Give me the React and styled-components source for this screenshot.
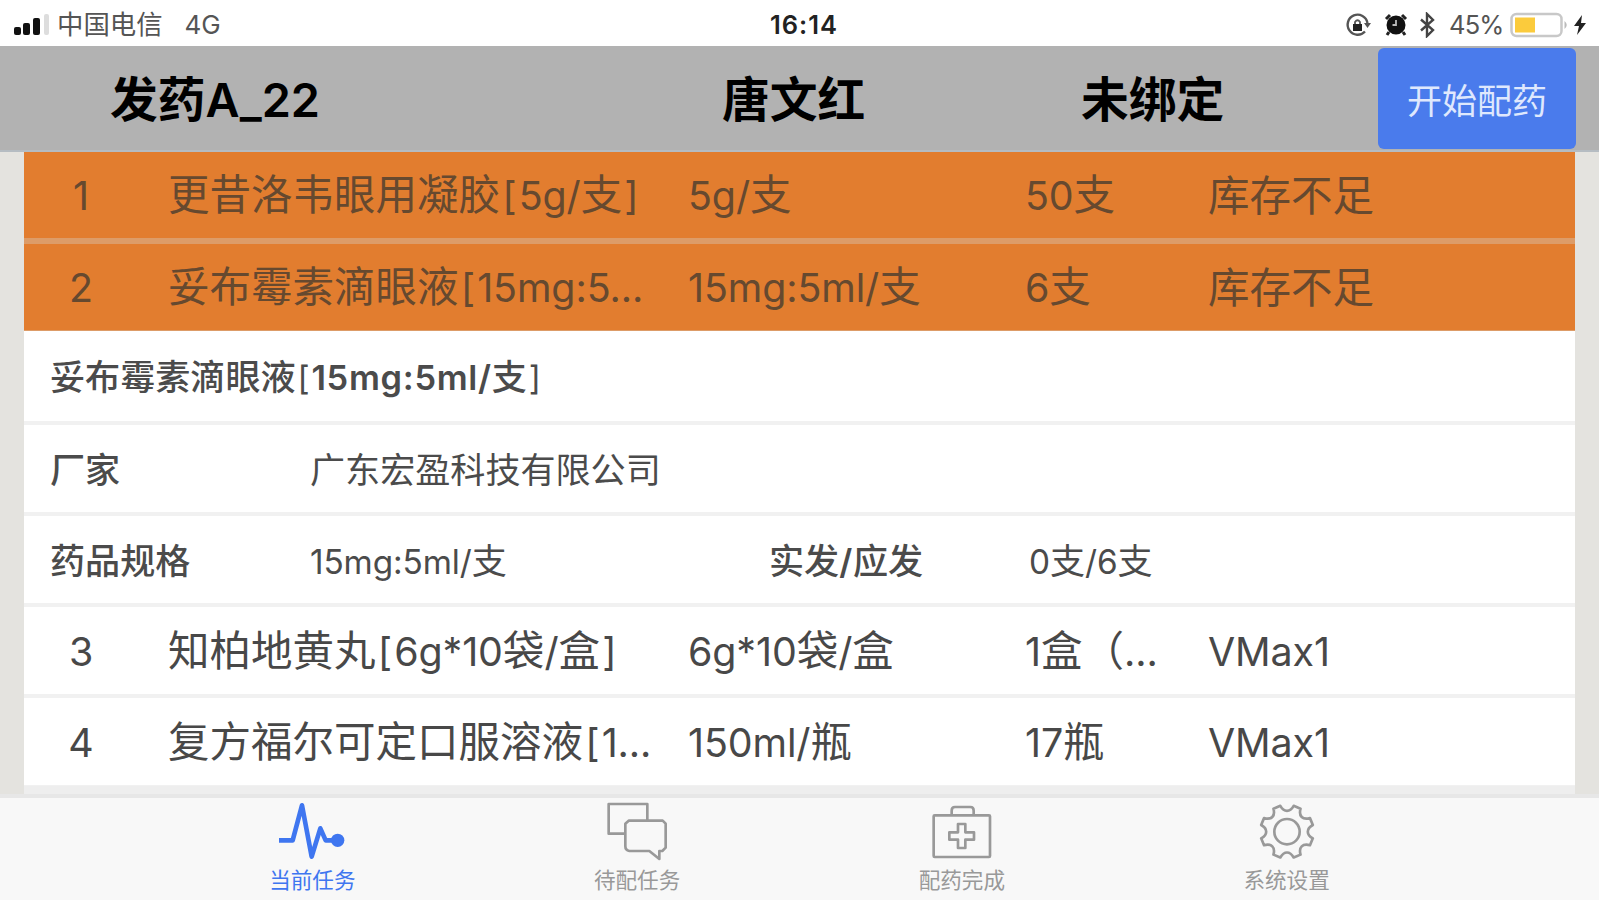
import React, { useState } from 'react';
import styled, { createGlobalStyle } from 'styled-components';

const GlobalStyle = createGlobalStyle`
  * {
    box-sizing: border-box;
  }
  body {
    margin: 0;
    overflow: hidden;
    font-family: Inter, "Noto Sans CJK SC", sans-serif;
  }
`;

const Screen = styled.div`
  display: flex;
  flex-direction: column;
  width: 1599px;
  height: 900px;
  background-color: #e4e3df;
`;

const StatusBar = styled.div`
  display: grid;
  grid-template-columns: 756px auto 1fr;
  align-items: center;
  height: 46px;
  padding: 3px 12px 0 14px;
  background-color: #fff;
  color: #555;
`;

const StatusGroup = styled.div`
  display: flex;
  align-items: center;
  justify-content: ${(props) => (props.$right ? 'flex-end' : 'flex-start')};
`;

const Carrier = styled.span`
  margin-left: 6px;
  font-size: 26.4px;
  line-height: 43px;
`;

const Network = styled.span`
  margin-left: 22px;
  font-size: 26px;
`;

const Clock = styled.span`
  font-size: 25.5px;
  font-weight: 600;
  letter-spacing: 1px;
  color: #222;
`;

const Percent = styled.span`
  width: 58px;
  margin: 0 3px 0 13px;
  font-size: 25.5px;
  letter-spacing: -0.8px;
`;

const Header = styled.header`
  display: flex;
  align-items: center;
  height: 106px;
  padding-left: 110px;
  background-color: #b2b2b2;
  border-bottom: 2px solid #b5bcc2;
  color: #000;
`;

const HeaderTitle = styled.div`
  width: ${(props) => props.$width}px;
  padding-top: 4px;
  font-size: 47.8px;
  font-weight: 600;
  line-height: 60px;
  white-space: nowrap;

  span {
    letter-spacing: 0;
  }
`;

const StartButton = styled.button`
  width: 198px;
  height: 101px;
  margin: 1px 0 0;
  padding: 4px 0 0;
  border: none;
  border-radius: 6px;
  background-color: #4a7bec;
  color: #dfe8fd;
  font-family: inherit;
  font-size: 35px;
  line-height: 50px;
  cursor: pointer;
`;

const List = styled.main`
  flex: 1;
  margin: 0 24px;
  background-color: #fff;
`;

const Row = styled.div`
  display: grid;
  grid-template-columns: 117px 520px 337px 183px 1fr;
  align-items: center;
  height: ${(props) => props.$height}px;
  padding: 1px 0 0 27px;
  background-color: ${(props) => (props.$warn ? '#e27d2f' : '#fff')};
  border-bottom: ${(props) => props.$line || 4}px solid ${(props) => (props.$warn ? '#dd9c68' : '#f1f1f1')};
  color: ${(props) => (props.$warn ? '#66492f' : '#484848')};
  font-size: 41.5px;
`;

const DetailRow = styled(Row)`
  grid-template-columns: ${(props) => props.$columns};
  padding: 3px 0 0 26px;
  color: #4b4b4b;
  font-size: 35.1px;
`;

const Cell = styled.div`
  font-weight: ${(props) => (props.$bold ? 500 : 400)};
  line-height: 60px;
  white-space: nowrap;
`;

const NumberCell = styled(Cell)`
  width: 60px;
  text-align: center;
`;

const Latin = styled.span`
  font-size: ${(props) => (props.$bold ? '0.98em' : '0.95em')};
  font-weight: ${(props) => (props.$bold ? 600 : 'inherit')};
  letter-spacing: ${(props) => (props.$bold ? '0.02em' : '-0.003em')};
`;

const Bracket = styled.span`
  margin: 0 0.055em;
  font-size: 0.95em;
  font-weight: 400;
`;

const ListEnd = styled.div`
  height: 8px;
  background-color: #eee;
`;

const TabBar = styled.nav`
  display: grid;
  grid-template-columns: repeat(4, 1fr);
  height: 106px;
  padding: 0 150px;
  background-color: #f8f8f8;
  border-top: 4px solid #e7e7e7;
`;

const Tab = styled.div`
  display: flex;
  flex-direction: column;
  align-items: center;
  color: ${(props) => (props.$active ? '#3f76f0' : '#999')};
  font-size: 21.6px;
  line-height: 37px;
  cursor: pointer;
`;

const TabIcon = styled.svg`
  width: 90px;
  height: 64px;
  fill: none;
  stroke: currentColor;
  stroke-width: 8;
  stroke-linejoin: round;
`;

const StatusIcon = styled.svg`
  margin-left: ${(props) => props.$gap || 0}px;
  flex: none;
`;

// latin runs are set a bit smaller than the chinese glyphs beside them
function Mixed({ text, bold }) {
  return text.split(/([[\]]|[\x20-\x5a\x5e-\x7e]+)/).filter(Boolean).map((part, i) => {
    if (part === '[' || part === ']') {
      return <Bracket key={i}>{part}</Bracket>;
    }
    return /^[\x20-\x7e]/.test(part) ? <Latin key={i} $bold={bold}>{part}</Latin> : part;
  });
}

const point = (radius, degrees) => {
  const a = (degrees * Math.PI) / 180;
  return `${(135 + radius * Math.sin(a)).toFixed(1)} ${(101 - radius * Math.cos(a)).toFixed(1)}`;
};

const gearPath = () => {
  let d = '';
  for (let k = 0; k < 8; k += 1) {
    const c = k * 45 + 22.5;
    d += `${k === 0 ? 'M' : 'L'}${point(80, c - 8)} L${point(80, c + 8)} `;
    d += `C${point(58, c + 14)} ${point(58, c + 31)} ${point(80, c + 37)} `;
  }
  return `${d}Z`;
};

function PulseIcon() {
  return (
    <TabIcon viewBox="0 0 270 192">
      <path strokeWidth="14" d="M36 127H77L105 22L134 176L160 91L176 127H212" />
      <circle cx="212" cy="127" r="20" fill="currentColor" stroke="none" />
    </TabIcon>
  );
}

function ChatIcon() {
  return (
    <TabIcon viewBox="0 0 270 192">
      <path d="M98 107H50V18H166V66" />
      <path d="M110 68H212L221 77V149L211 159H202V183L172 159H112Q100 157 100 145V77Z" />
    </TabIcon>
  );
}

function KitIcon() {
  return (
    <TabIcon viewBox="0 0 270 192">
      <rect x="50" y="52" width="169" height="125" rx="3" />
      <path d="M104 52V38Q104 27 114 27H160Q170 27 170 38V52" />
      <path d="M123 78H145V103H171V125H145V150H123V125H97V103H123Z" />
    </TabIcon>
  );
}

function GearIcon() {
  return (
    <TabIcon viewBox="0 0 270 192">
      <path d={gearPath()} />
      <circle cx="135" cy="101" r="38" />
    </TabIcon>
  );
}

const tabs = [
  { label: '当前任务', Icon: PulseIcon },
  { label: '待配任务', Icon: ChatIcon },
  { label: '配药完成', Icon: KitIcon },
  { label: '系统设置', Icon: GearIcon },
];

const shortage = [
  { id: 1, name: '更昔洛韦眼用凝胶[5g/支]', spec: '5g/支', count: '50支', place: '库存不足', height: 92, line: 6 },
  { id: 2, name: '妥布霉素滴眼液[15mg:5...', spec: '15mg:5ml/支', count: '6支', place: '库存不足', height: 87, line: 1 },
];

const others = [
  { id: 3, name: '知柏地黄丸[6g*10袋/盒]', spec: '6g*10袋/盒', count: '1盒（...', place: 'VMax1', height: 91 },
  { id: 4, name: '复方福尔可定口服溶液[1...', spec: '150ml/瓶', count: '17瓶', place: 'VMax1', height: 88, line: 1 },
];

function MedicineRow({ item, warn }) {
  return (
    <Row $warn={warn} $height={item.height} $line={item.line}>
      <NumberCell><Mixed text={String(item.id)} /></NumberCell>
      <Cell><Mixed text={item.name} /></Cell>
      <Cell><Mixed text={item.spec} /></Cell>
      <Cell><Mixed text={item.count} /></Cell>
      <Cell><Mixed text={item.place} /></Cell>
    </Row>
  );
}

function PhoneStatus() {
  return (
    <StatusBar>
      <StatusGroup>
        <StatusIcon width="37" height="24" viewBox="0 0 37 24">
          <rect x="0" y="14" width="7" height="8" rx="2" fill="#111" />
          <rect x="9" y="10" width="7" height="12" rx="2" fill="#111" />
          <rect x="19" y="5" width="7" height="17" rx="2" fill="#111" />
          <rect x="30" y="1" width="5" height="21" rx="2" fill="#ddd" />
        </StatusIcon>
        <Carrier>中国电信</Carrier>
        <Network>4G</Network>
      </StatusGroup>
      <Clock>16:14</Clock>
      <StatusGroup $right>
        <StatusIcon width="26" height="26" viewBox="0 0 26 26" fill="none" stroke="#555" strokeWidth="2.4">
          <path d="M20 19.5A10 10 0 1 1 22.5 11" />
          <path d="M19 11H26L22.5 16Z" fill="#555" stroke="none" />
          <rect x="8" y="12" width="9" height="7" fill="#222" stroke="none" />
          <path d="M10 12V10Q12.5 6.5 15 10V12" strokeWidth="1.8" />
        </StatusIcon>
        <StatusIcon $gap={13} width="24" height="26" viewBox="0 0 24 26">
          <circle cx="12" cy="13" r="9.5" fill="#111" />
          <path d="M2 7L6 3M22 7L18 3M5 20L3 23M19 20L21 23" stroke="#222" strokeWidth="3" />
          <path d="M12 8V13H8.5" fill="none" stroke="#bbb" strokeWidth="1.8" />
        </StatusIcon>
        <StatusIcon $gap={10} width="18" height="26" viewBox="0 0 18 26" fill="none" stroke="#444" strokeWidth="2.4">
          <path d="M3 7.5L15 18L9 24V2L15 8L3 18.5" />
        </StatusIcon>
        <Percent>45%</Percent>
        <StatusIcon width="58" height="26" viewBox="0 0 58 26">
          <rect x="1.5" y="2" width="50" height="22" rx="5" fill="#fff" stroke="#c8c8c8" strokeWidth="2.5" />
          <rect x="5" y="5.5" width="20" height="15" fill="#fbcb3c" />
          <path d="M54.5 9Q59 13 54.5 17Z" fill="#bbb" />
        </StatusIcon>
        <StatusIcon $gap={5} width="14" height="26" viewBox="0 0 14 26">
          <path d="M9 3L1 14H6L4 23L13 11H8Z" fill="#222" />
        </StatusIcon>
      </StatusGroup>
    </StatusBar>
  );
}

export default function App() {
  const [active, setActive] = useState(0);

  return (
    <Screen>
      <GlobalStyle />
      <PhoneStatus />
      <Header>
        <HeaderTitle $width={612}><Mixed text="发药A_22" bold /></HeaderTitle>
        <HeaderTitle $width={359}>唐文红</HeaderTitle>
        <HeaderTitle $width={297}>未绑定</HeaderTitle>
        <StartButton>开始配药</StartButton>
      </Header>
      <List>
        {shortage.map((item) => <MedicineRow key={item.id} item={item} warn />)}
        <DetailRow $height={94} $columns="1fr">
          <Cell $bold><Mixed text="妥布霉素滴眼液[15mg:5ml/支]" bold /></Cell>
        </DetailRow>
        <DetailRow $height={91} $columns="260px 1fr">
          <Cell $bold>厂家</Cell>
          <Cell>广东宏盈科技有限公司</Cell>
        </DetailRow>
        <DetailRow $height={91} $columns="260px 459px 260px 1fr">
          <Cell $bold>药品规格</Cell>
          <Cell><Mixed text="15mg:5ml/支" /></Cell>
          <Cell $bold><Mixed text="实发/应发" bold /></Cell>
          <Cell><Mixed text="0支/6支" /></Cell>
        </DetailRow>
        {others.map((item) => <MedicineRow key={item.id} item={item} />)}
        <ListEnd />
      </List>
      <TabBar>
        {tabs.map(({ label, Icon }, i) => (
          <Tab key={label} $active={i === active} onClick={() => setActive(i)}>
            <Icon />
            {label}
          </Tab>
        ))}
      </TabBar>
    </Screen>
  );
}
